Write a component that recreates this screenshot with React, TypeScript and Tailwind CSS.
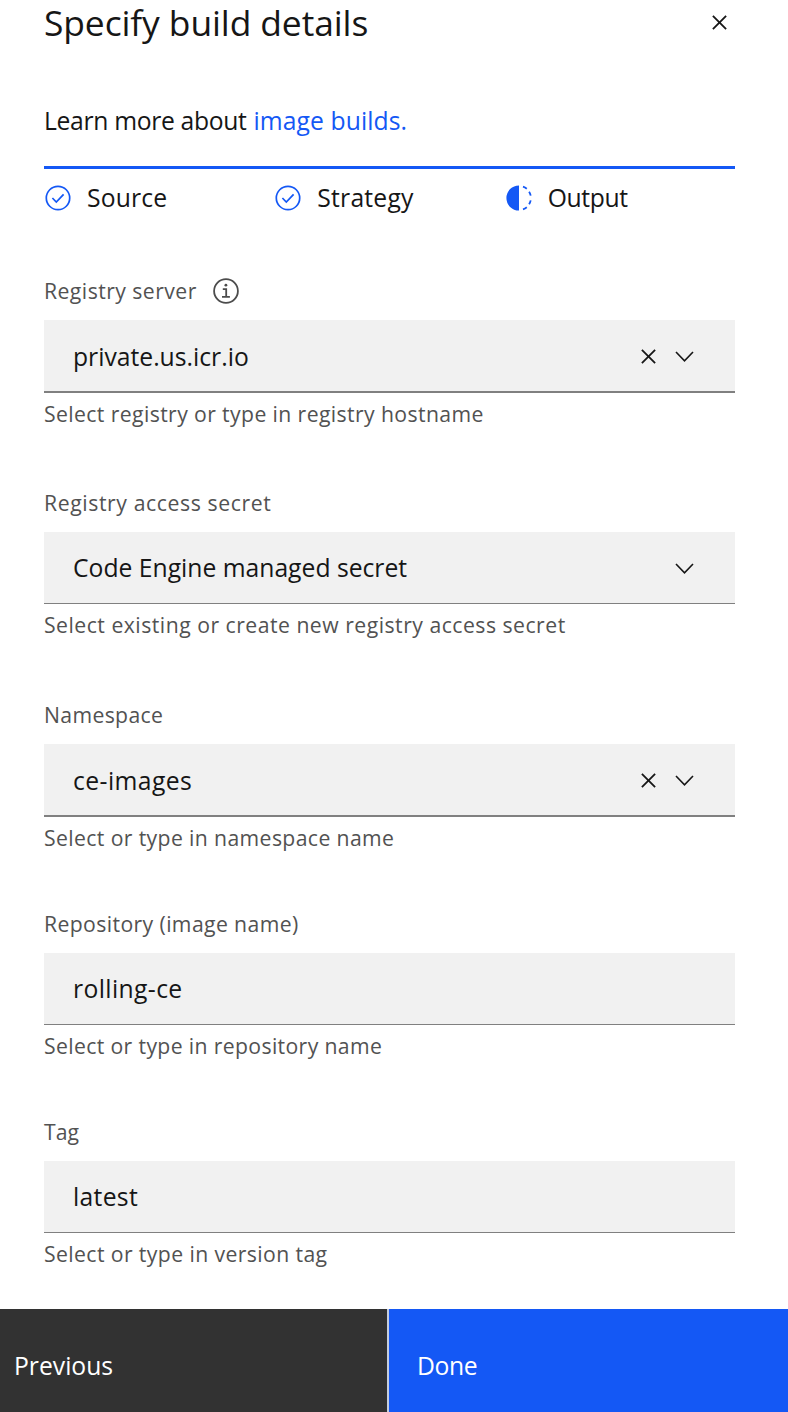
function Close({ className }: { className: string }) {
  return (
    <svg viewBox="0 0 32 32" fill="currentColor" className={className}>
      <path d="M17.41 16 24 9.41 22.59 8 16 14.59 9.41 8 8 9.41 14.59 16 8 22.59 9.41 24 16 17.41 22.59 24 24 22.59z" />
    </svg>
  );
}

function Chevron({ className }: { className: string }) {
  return (
    <svg viewBox="0 0 29 29" fill="none" stroke="currentColor" strokeWidth="1.6" className={className}>
      <path d="m6 10 8.5 8.8L23 10" />
    </svg>
  );
}

function Checked() {
  return (
    <svg viewBox="0 0 26 26" fill="none" stroke="#1458f5" strokeWidth="1.7" className="size-[26px] shrink-0">
      <circle cx="13" cy="13" r="11.7" />
      <path d="m7.4 13 3.9 4 7.3-7.6" />
    </svg>
  );
}

function Current() {
  return (
    <svg viewBox="0 0 26 26" className="size-[26px] shrink-0">
      <path d="M13 .4a12.6 12.6 0 0 0 0 25.2z" fill="#1458f5" />
      <path
        d="M17 1.7a12 12 0 0 1 3.8 2.1M23.1 6.8a12 12 0 0 1 1.6 3.8M24.7 15.4a12 12 0 0 1-1.6 3.8M20.8 22.2a12 12 0 0 1-3.8 2.1"
        stroke="#1458f5"
        strokeWidth="1.8"
        fill="none"
      />
    </svg>
  );
}

function Info() {
  return (
    <svg viewBox="0 0 26 26" fill="none" stroke="#4c4c4c" strokeWidth="1.8" className="size-[26px] shrink-0">
      <circle cx="13" cy="13" r="11.9" />
      <path d="M9.8 11.2h3.4v7M9 18.8h7.9" />
      <circle cx="12.9" cy="7.2" r="1.4" fill="#4c4c4c" stroke="none" />
    </svg>
  );
}

type FieldProps = {
  label: string;
  labelClass: string;
  value: string;
  valueClass: string;
  helper: string;
  helperClass: string;
  className: string;
  info?: boolean;
  clearable?: boolean;
  select?: boolean;
};

function Field(p: FieldProps) {
  return (
    <div className={p.className}>
      <div className="mb-[14px] flex h-[30px] items-center gap-4 text-[21.2px] text-[#525252]">
        <span className={p.labelClass}>{p.label}</span>
        {p.info && <Info />}
      </div>
      <div
        className={
          p.clearable
            ? "flex h-[73px] items-center border-b-2 border-[#808080] bg-[#f1f1f1] pt-[2px] pr-9 pl-[29px]"
            : "flex h-[72px] items-center border-b border-[#808080] bg-[#f1f1f1] pt-px pr-9 pl-[29px]"
        }
      >
        <span className="flex-1 text-[24.7px] text-[#161616]">
          <span className={p.valueClass}>{p.value}</span>
        </span>
        {p.clearable && <Close className="mr-[7px] size-[29px] text-[#161616]" />}
        {p.select && <Chevron className="size-[29px] text-[#161616]" />}
      </div>
      <div className="mt-[6px] mb-px flex h-[30px] items-center text-[21.2px] text-[#525252]">
        <span className={p.helperClass}>{p.helper}</span>
      </div>
    </div>
  );
}

export default function App() {
  return (
    <div className="flex h-[1412px] w-[788px] flex-col overflow-hidden bg-white font-['Open_Sans','Noto_Sans',sans-serif] whitespace-nowrap text-[#161616]">
      <div className="flex flex-col pr-[53px] pl-[44px]">
        <header className="flex h-[45px] items-center pb-px">
          <h1 className="flex-1 text-[35.4px] leading-[44px] tracking-[-0.1px]">Specify build details</h1>
          <Close className="mr-px size-[29px]" />
        </header>
        <p className="mt-[61px] flex h-[30px] items-center gap-[7px] text-[24.7px]">
          <span className="tracking-[-0.33px]">Learn more about</span>
          <a className="tracking-[0.08px] text-[#1458f5]">image builds.</a>
        </p>
        <div className="mt-[30px] grid grid-cols-3 border-t-[3px] border-[#1458f5] pt-[14px] text-[24.7px]">
          <div className="flex h-[30px] items-center gap-4 pl-px">
            <Checked />
            <span className="tracking-[0.15px]">Source</span>
          </div>
          <div className="flex h-[30px] items-center gap-4 pl-px">
            <Checked />
            <span className="tracking-[0.22px]">Strategy</span>
          </div>
          <div className="flex h-[30px] items-center gap-4 pl-px">
            <Current />
            <span className="tracking-[-0.35px]">Output</span>
          </div>
        </div>
        <Field
          className="mt-[63px]"
          label="Registry server"
          labelClass="tracking-[0.45px]"
          value="private.us.icr.io"
          valueClass="tracking-normal"
          helper="Select registry or type in registry hostname"
          helperClass="tracking-[0.39px]"
          info
          clearable
          select
        />
        <Field
          className="mt-[58px]"
          label="Registry access secret"
          labelClass="tracking-[0.6px]"
          value="Code Engine managed secret"
          valueClass="tracking-normal"
          helper="Select existing or create new registry access secret"
          helperClass="tracking-[0.49px]"
          select
        />
        <Field
          className="mt-[59px]"
          label="Namespace"
          labelClass="tracking-[0.35px]"
          value="ce-images"
          valueClass="tracking-[0.42px]"
          helper="Select or type in namespace name"
          helperClass="tracking-[0.38px]"
          clearable
          select
        />
        <Field
          className="mt-[55px]"
          label="Repository (image name)"
          labelClass="tracking-[0.39px]"
          value="rolling-ce"
          valueClass="tracking-[0.38px]"
          helper="Select or type in repository name"
          helperClass="tracking-[0.36px]"
        />
        <Field
          className="mt-[55px]"
          label="Tag"
          labelClass="tracking-normal"
          value="latest"
          valueClass="tracking-[0.3px]"
          helper="Select or type in version tag"
          helperClass="tracking-[0.4px]"
        />
      </div>
      <footer className="mt-[39px] flex h-[103px] text-[24.7px] text-white">
        <button className="flex w-[387px] items-center bg-[#323232] pt-[11px] pl-[14px] text-left">Previous</button>
        <button className="flex flex-1 items-center border-l-2 border-[#c4cdde] bg-[#1458f5] pt-[11px] pl-7 text-left tracking-[-0.4px]">
          Done
        </button>
      </footer>
    </div>
  );
}
